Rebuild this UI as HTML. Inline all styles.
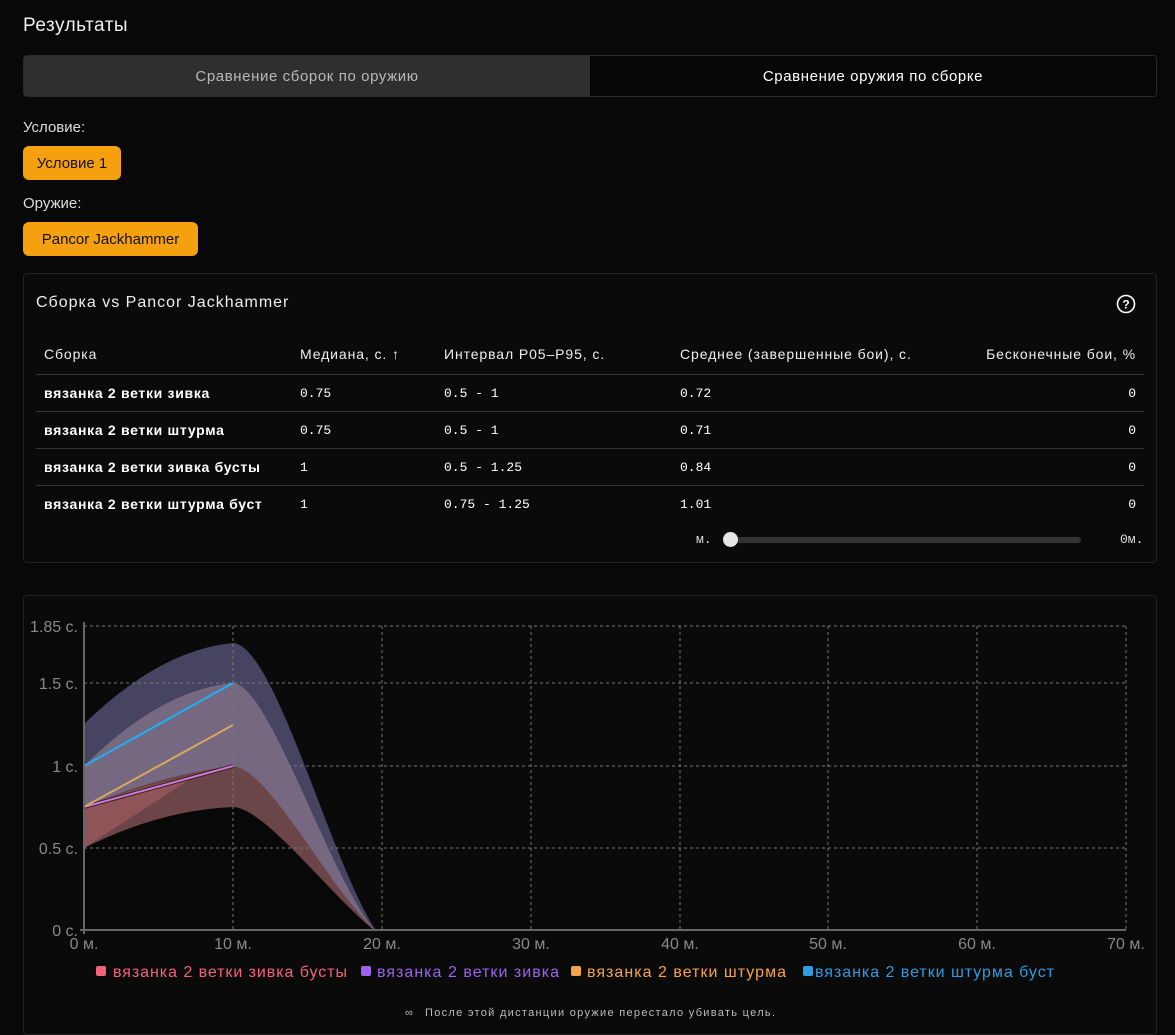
<!DOCTYPE html>
<html><head><meta charset="utf-8"><style>
*{box-sizing:border-box;margin:0;padding:0}
body{width:1175px;height:1027px;background:#080808;font-family:"Liberation Sans",sans-serif;color:#e8e8e8;position:relative;overflow:hidden}
.abs{position:absolute}
h1{position:absolute;left:23px;top:15px;font-size:19px;font-weight:normal;color:#f0f0f0;letter-spacing:0.5px}
.tabs{left:23px;top:55px;width:1134px;height:42px;border:1px solid #2a2a2a;border-radius:4px;display:flex;overflow:hidden;background:#070707}
.tabs div{flex:1;display:flex;align-items:center;justify-content:center;font-size:15px;letter-spacing:0.6px}
.t1{background:#2f2f2f;color:#b8b8b8}
.t2{color:#fff}
.lbl{font-size:15px;color:#ddd}
.btn{background:#f5a00e;color:#111;font-size:15px;border-radius:6px;display:flex;align-items:center;justify-content:center;height:34px}
.card{border:1px solid #222;border-radius:4px;background:#0a0a0a}
.th{font-size:14px;color:#eee;top:346px;letter-spacing:0.9px}
.row{left:36px;width:1108px;border-top:1px solid #333;height:37px}
.c{position:absolute;font-size:14px;top:10px;color:#fff;letter-spacing:0.7px}
.n{font-family:"Liberation Mono",monospace;font-size:13px;letter-spacing:0;top:11px}
.b{font-weight:bold}
</style></head><body>
<h1>Результаты</h1>
<div class="abs tabs"><div class="t1">Сравнение сборок по оружию</div><div class="t2">Сравнение оружия по сборке</div></div>
<div class="abs lbl" style="left:23px;top:119px">Условие:</div>
<div class="abs btn" style="left:23px;top:146px;width:98px">Условие 1</div>
<div class="abs lbl" style="left:23px;top:195px">Оружие:</div>
<div class="abs btn" style="left:23px;top:222px;width:175px">Pancor Jackhammer</div>

<div class="abs card" style="left:23px;top:273px;width:1134px;height:290px"></div>
<div class="abs" style="left:36px;top:294px;font-size:16px;color:#eee;letter-spacing:1px">Сборка vs Pancor Jackhammer</div>
<svg class="abs" style="left:1116px;top:294px" width="20" height="20" viewBox="0 0 20 20"><circle cx="10" cy="10" r="8.5" fill="none" stroke="#fff" stroke-width="1.6"/><text x="10" y="14.5" text-anchor="middle" font-size="12" font-weight="bold" fill="#fff" font-family="Liberation Sans">?</text></svg>
<div class="abs th" style="left:44px">Сборка</div>
<div class="abs th" style="left:300px">Медиана, с. ↑</div>
<div class="abs th" style="left:444px">Интервал P05–P95, с.</div>
<div class="abs th" style="left:680px">Среднее (завершенные бои), с.</div>
<div class="abs th" style="right:39px">Бесконечные бои, %</div>
<div class="abs row" style="top:374px"><span class="c b" style="left:8px">вязанка 2 ветки зивка</span><span class="c n" style="left:264px">0.75</span><span class="c n" style="left:408px">0.5 - 1</span><span class="c n" style="left:644px">0.72</span><span class="c n" style="right:8px">0</span></div>
<div class="abs row" style="top:411px"><span class="c b" style="left:8px">вязанка 2 ветки штурма</span><span class="c n" style="left:264px">0.75</span><span class="c n" style="left:408px">0.5 - 1</span><span class="c n" style="left:644px">0.71</span><span class="c n" style="right:8px">0</span></div>
<div class="abs row" style="top:448px"><span class="c b" style="left:8px">вязанка 2 ветки зивка бусты</span><span class="c n" style="left:264px">1</span><span class="c n" style="left:408px">0.5 - 1.25</span><span class="c n" style="left:644px">0.84</span><span class="c n" style="right:8px">0</span></div>
<div class="abs row" style="top:485px"><span class="c b" style="left:8px">вязанка 2 ветки штурма буст</span><span class="c n" style="left:264px">1</span><span class="c n" style="left:408px">0.75 - 1.25</span><span class="c n" style="left:644px">1.01</span><span class="c n" style="right:8px">0</span></div>
<div class="abs" style="left:696px;top:532px;color:#ddd;font-family:'Liberation Mono',monospace;font-size:13px">м.</div>
<div class="abs" style="left:725px;top:537px;width:356px;height:6px;background:#333;border-radius:3px"></div>
<div class="abs" style="left:723px;top:532px;width:15px;height:15px;background:#e6e6e6;border-radius:50%"></div>
<div class="abs" style="left:1120px;top:532px;color:#ddd;font-family:'Liberation Mono',monospace;font-size:13px">0м.</div>

<div class="abs card" style="left:23px;top:595px;width:1134px;height:440px"></div>
<svg class="abs" style="left:0;top:0" width="1175" height="1027">
<path d="M84,724 Q160,650 233,643 C275,645 330,860 375,929 L84,930Z" fill="#474461"/>
<path d="M84,766 Q160,690 233,683 C270,685 330,880 375,930 L84,930Z" fill="#766880"/>
<path d="M84,807 Q160,775 233,766 C270,770 330,890 375,930 L84,930Z" fill="#6b4547"/>
<path d="M84,807 Q140,786 195,776 L84,848Z" fill="#8e5458"/>
<path d="M84,848 Q160,810 233,807 C265,808 330,895 375,931 L84,931Z" fill="#080808"/>
<g stroke="#777" stroke-width="1" stroke-dasharray="3,3" fill="none">
<line x1="84" y1="626" x2="1126" y2="626"/><line x1="84" y1="683" x2="1126" y2="683"/><line x1="84" y1="766" x2="1126" y2="766"/><line x1="84" y1="848" x2="1126" y2="848"/>
<line x1="233" y1="626" x2="233" y2="930"/><line x1="382" y1="626" x2="382" y2="930"/><line x1="531" y1="626" x2="531" y2="930"/><line x1="680" y1="626" x2="680" y2="930"/><line x1="828" y1="626" x2="828" y2="930"/><line x1="977" y1="626" x2="977" y2="930"/><line x1="1126" y1="626" x2="1126" y2="930"/>
</g>
<line x1="84" y1="807" x2="233" y2="766" stroke="#3a2018" stroke-width="4"/>
<line x1="84" y1="807" x2="233" y2="766" stroke="#c87ae0" stroke-width="2"/>
<line x1="84" y1="807" x2="233" y2="725" stroke="#d9a860" stroke-width="2"/>
<line x1="84" y1="766" x2="233" y2="683" stroke="#1eb0f5" stroke-width="2"/>
<line x1="84" y1="622" x2="84" y2="934" stroke="#666" stroke-width="2"/>
<line x1="80" y1="930" x2="1126" y2="930" stroke="#666" stroke-width="2"/>
<g font-family="Liberation Sans" font-size="16" fill="#888" text-anchor="end">
<text x="78" y="632">1.85 с.</text><text x="78" y="689">1.5 с.</text><text x="78" y="772">1 с.</text><text x="78" y="854">0.5 с.</text><text x="78" y="936">0 с.</text></g>
<g font-family="Liberation Sans" font-size="16" fill="#888" text-anchor="middle">
<text x="84" y="949">0 м.</text><text x="233" y="949">10 м.</text><text x="382" y="949">20 м.</text><text x="531" y="949">30 м.</text><text x="680" y="949">40 м.</text><text x="828" y="949">50 м.</text><text x="977" y="949">60 м.</text><text x="1126" y="949">70 м.</text></g>
<g font-family="Liberation Sans" font-size="16">
<rect x="96" y="966" width="10" height="10" rx="2" fill="#f5607a"/><text x="113" y="977" fill="#f5607a" textLength="234">вязанка 2 ветки зивка бусты</text>
<rect x="361" y="966" width="10" height="10" rx="2" fill="#9c62f0"/><text x="377" y="977" fill="#9c62f0" textLength="182">вязанка 2 ветки зивка</text>
<rect x="571" y="966" width="10" height="10" rx="2" fill="#f7a34a"/><text x="587" y="977" fill="#f7a34a" textLength="199">вязанка 2 ветки штурма</text>
<rect x="803" y="966" width="10" height="10" rx="2" fill="#2f9be0"/><text x="815" y="977" fill="#2f9be0" textLength="239">вязанка 2 ветки штурма буст</text>
</g>
<text x="405" y="1016" font-family="Liberation Sans" font-size="11" fill="#bbb">∞</text>
<text x="425" y="1016" font-family="Liberation Sans" font-size="11" fill="#bbb" textLength="350">После этой дистанции оружие перестало убивать цель.</text>
</svg>
</body></html>
